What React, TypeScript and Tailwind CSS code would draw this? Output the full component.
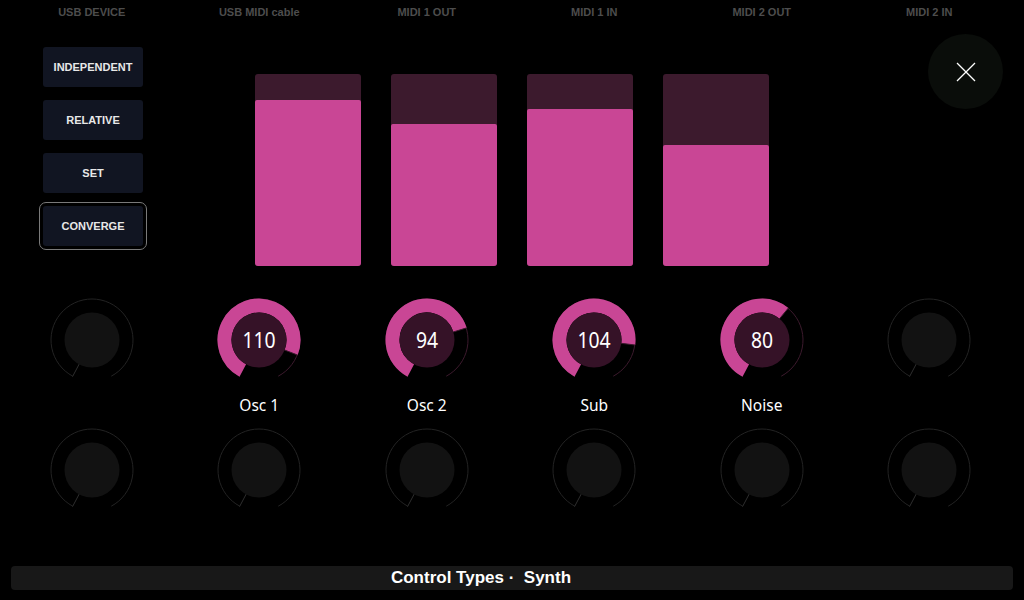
import React from "react";

const S = 152;
const PINK = "#c94695";
const DARK = "#3c1a2d";

function pt(a: number, r: number, c = 42) {
  const rad = (a * Math.PI) / 180;
  return [c + r * Math.sin(rad), c - r * Math.cos(rad)];
}
function arc(a1: number, a2: number, r: number) {
  const [x1, y1] = pt(a1, r);
  const [x2, y2] = pt(a2, r);
  const large = a2 - a1 > 180 ? 1 : 0;
  return `M ${x1} ${y1} A ${r} ${r} 0 ${large} 1 ${x2} ${y2}`;
}

function Knob({ value, label }: { value?: number; label?: string }) {
  const active = value !== undefined;
  const ang = active ? -S + (2 * S * (value as number)) / 127 : -S;
  const [px1, py1] = pt(ang, 27);
  const [px2, py2] = pt(ang, 41.5);
  return (
    <div className="flex flex-col items-center">
      <svg width="84" height="84" viewBox="0 0 84 84">
        <path d={arc(-S, S, 41)} fill="none" stroke={active ? DARK : "#232323"} strokeWidth="1" />
        {active && <path d={arc(-S, ang, 34.5)} fill="none" stroke={PINK} strokeWidth="14" />}
        <line x1={px1} y1={py1} x2={px2} y2={py2} stroke={active ? DARK : "#2e2e2e"} strokeWidth="1" />
        <circle cx="42" cy="42" r="27.5" fill={active ? "#351227" : "#121212"} />
        {active && (
          <text
            x="0"
            y="50"
            textAnchor="middle"
            fill="#ffffff"
            fontSize="22"
            transform="translate(42 0) scale(0.88 1)"
            fontFamily="'Noto Sans', 'Open Sans', sans-serif"
          >
            {value}
          </text>
        )}
      </svg>
      {label !== undefined && (
        <div className="mt-[13px] h-[20px] text-[15.5px] leading-[20px] text-white font-['Noto_Sans',sans-serif]">
          {label}
        </div>
      )}
    </div>
  );
}

const headers = ["USB DEVICE", "USB MIDI cable", "MIDI 1 OUT", "MIDI 1 IN", "MIDI 2 OUT", "MIDI 2 IN"];
const faders = [110, 94, 104, 80];
const row1: { value?: number; label?: string }[] = [
  {},
  { value: 110, label: "Osc 1" },
  { value: 94, label: "Osc 2" },
  { value: 104, label: "Sub" },
  { value: 80, label: "Noise" },
  {},
];

export default function App() {
  return (
    <div className="w-[1024px] h-[600px] bg-black overflow-hidden flex flex-col font-['Liberation_Sans',Arial,sans-serif]">
      <div className="ml-[8px] w-[1005px] h-[25px] grid grid-cols-6 items-center">
        {headers.map((h) => (
          <div key={h} className="text-center text-[11px] font-bold text-[#4d4d4d] leading-none">
            {h}
          </div>
        ))}
      </div>

      <div className="h-[273px] grid grid-cols-[200px_1fr_200px]">
        <div className="pl-[43px] pt-[22px] flex flex-col gap-[13px]">
          {["INDEPENDENT", "RELATIVE", "SET", "CONVERGE"].map((b, i) => (
            <div
              key={b}
              className={
                "w-[100px] h-[40px] rounded-[3px] bg-[#111522] flex items-center justify-center pt-[1px] text-[11px] font-bold text-[#e8e8e8] " +
                (i === 3 ? "outline outline-1 outline-offset-[3px] outline-[#7a7a7a]" : "")
              }
            >
              {b}
            </div>
          ))}
        </div>
        <div className="pt-[49px] flex justify-center gap-[30px]">
          {faders.map((v, i) => (
            <div key={i} className="w-[106px] h-[192px] rounded-[3px] bg-[#3c1a2d] flex flex-col justify-end overflow-hidden">
              <div className="w-full rounded-t-[2px] bg-[#c94695]" style={{ height: `${Math.round((v / 127) * 192)}px` }} />
            </div>
          ))}
        </div>
        <div className="flex justify-end pr-[21px] pt-[9px]">
          <div className="w-[75px] h-[75px] rounded-full bg-[#0a0d0a] flex items-center justify-center">
            <svg width="20" height="20" viewBox="0 0 20 20">
              <line x1="1" y1="1" x2="19" y2="19" stroke="#ffffff" strokeWidth="1.2" />
              <line x1="19" y1="1" x2="1" y2="19" stroke="#ffffff" strokeWidth="1.2" />
            </svg>
          </div>
        </div>
      </div>

      <div className="ml-[8px] w-[1005px] grid grid-cols-6 items-start">
        {row1.map((k, i) => (
          <div key={i} className="flex justify-center">
            <Knob value={k.value} label={k.label} />
          </div>
        ))}
      </div>
      <div className="ml-[8px] w-[1005px] grid grid-cols-6 mt-[13px]">
        {Array.from({ length: 6 }).map((_, i) => (
          <div key={i} className="flex justify-center">
            <Knob />
          </div>
        ))}
      </div>

      <div className="mx-[11px] mt-auto mb-[10px] h-[24px] rounded-[4px] bg-[#181818] flex items-center justify-center pr-[62px] text-white font-bold text-[17px] whitespace-pre">
        {"Control Types ·  Synth"}
      </div>
    </div>
  );
}
